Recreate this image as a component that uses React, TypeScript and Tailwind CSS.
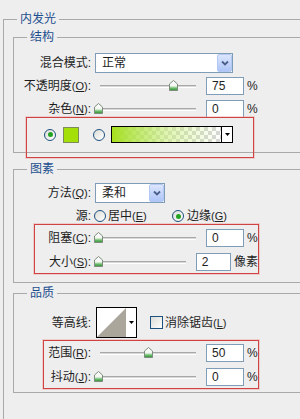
import React from 'react';

const FONT = '"Liberation Sans", "Noto Sans CJK SC", sans-serif';

const Legend: React.FC<{ children: React.ReactNode }> = ({ children }) => (
  <legend className="ml-[13px] px-[3px] text-[12px] leading-[16px] text-[#1d4f8f]">{children}</legend>
);

const Key: React.FC<{ k: string }> = ({ k }) => (
  <span className="text-[11px]">(<u>{k}</u>)</span>
);

const ComboButton: React.FC = () => (
  <div className="flex h-[18px] w-[15px] items-center justify-center rounded-[2px] border border-[#b4c8f4] bg-gradient-to-b from-[#dce6fd] to-[#aec5f7]">
    <svg width="8" height="6" viewBox="0 0 8 6">
      <path d="M1 1.5 L4 4.5 L7 1.5" fill="none" stroke="#4a5f8a" strokeWidth="1.8" />
    </svg>
  </div>
);

const Select: React.FC<{ value: string; width: string }> = ({ value, width }) => (
  <div className={`flex h-[20px] items-center border border-[#7f9db9] bg-white pl-[6px] ${width}`}>
    <span className="flex-1">{value}</span>
    <ComboButton />
  </div>
);

const Slider: React.FC<{ value: number }> = ({ value }) => (
  <div className="relative h-[18px] w-[115px]">
    <div className="absolute left-[9px] right-[10px] top-[8px] h-[3px] border-t border-b border-t-[#a8a8a8] border-b-white bg-[#d8d8d8]" />
    <svg className="absolute top-[3px]" style={{ left: 7 + value - 4.5 }} width="9" height="11" viewBox="0 0 9 11">
      <defs>
        <linearGradient id="thumb" x1="0" y1="0" x2="0" y2="1">
          <stop offset="0" stopColor="#ffffff" />
          <stop offset="0.55" stopColor="#f2f5f0" />
          <stop offset="0.75" stopColor="#6fc06f" />
          <stop offset="1" stopColor="#2f8f33" />
        </linearGradient>
      </defs>
      <path d="M0.5 10.5 V4 L4.5 0.5 L8.5 4 V10.5 Z" fill="url(#thumb)" stroke="#7d8c7d" strokeWidth="1" />
    </svg>
  </div>
);

const NumBox: React.FC<{ value: string }> = ({ value }) => (
  <div className="h-[18px] w-[38px] border border-[#7f9db9] bg-white pl-[5px] leading-[16px]">{value}</div>
);

const Radio: React.FC<{ checked?: boolean }> = ({ checked }) => (
  <div className="flex h-[12px] w-[12px] items-center justify-center rounded-full border border-[#1c5180] bg-gradient-to-br from-[#dcdcd7] to-white">
    {checked && <div className="h-[5px] w-[5px] rounded-full bg-[#23a323]" />}
  </div>
);

const SliderRow: React.FC<{
  label: React.ReactNode;
  labelW: string;
  value: number;
  num: string;
  unit: string;
}> = ({ label, labelW, value, num, unit }) => (
  <div className="flex h-[18px] items-center">
    <div className={`shrink-0 whitespace-nowrap text-right ${labelW}`}>{label}</div>
    <Slider value={value} />
    <NumBox value={num} />
    <span className="ml-[3px] shrink-0 whitespace-nowrap">{unit}</span>
  </div>
);

const RedBox: React.FC<{ className: string; children: React.ReactNode }> = ({ className, children }) => (
  <div className={`border border-[#cf4343] shadow-[0_0_0_1px_rgba(235,140,140,0.35)] ${className}`}>{children}</div>
);

export default function App() {
  return (
    <div className="h-[419px] w-[300px] overflow-hidden bg-[#eeeeee] text-[12px] text-[#1e1e1e]" style={{ fontFamily: FONT }}>
      <fieldset className="ml-[3px] mt-[11px] h-[460px] w-[345px] border border-[#a9a9a9]">
        <Legend>内发光</Legend>

        <fieldset className="ml-[9px] mt-[2px] w-[330px] border border-[#a9a9a9]">
          <Legend>结构</Legend>
          <div className="mt-[8px] flex h-[20px] items-center">
            <div className="w-[77px] text-right">混合模式:</div>
            <div className="ml-[4px]">
              <Select value="正常" width="w-[138px]" />
            </div>
          </div>
          <div className="mt-[4px]">
            <SliderRow label={<>不透明度<Key k="O" />:</>} labelW="w-[77px]" value={75} num="75" unit="%" />
          </div>
          <div className="mt-[5px]">
            <SliderRow label={<>杂色<Key k="N" />:</>} labelW="w-[77px]" value={0} num="0" unit="%" />
          </div>
          <RedBox className="relative -mb-[6px] ml-[12px] mt-[-1px] w-[228px] pb-[14px] pt-[8px]">
            <div className="flex h-[17px] items-center">
              <div className="ml-[17px]"><Radio checked /></div>
              <div className="ml-[7px] h-[16px] w-[16px] border border-[#7c8a5c] bg-[#a4df0a]" />
              <div className="ml-[14px]"><Radio /></div>
              <div className="ml-[6px] flex h-[17px] w-[122px] border border-black">
                <div className="relative flex-1 bg-[repeating-conic-gradient(#d6d6d6_0%_25%,#ffffff_0%_50%)] bg-[length:8px_8px]">
                  <div className="absolute inset-0 bg-gradient-to-r from-[#a6e01a] via-[#c9ee7c]/60 to-transparent" />
                </div>
                <div className="flex w-[11px] items-center justify-center border-l border-black bg-white">
                  <svg width="5" height="3" viewBox="0 0 5 3"><path d="M0 0 H5 L2.5 3 Z" fill="#000" /></svg>
                </div>
              </div>
            </div>
          </RedBox>
        </fieldset>

        <fieldset className="ml-[9px] mt-[8px] w-[330px] border border-[#a9a9a9]">
          <Legend>图素</Legend>
          <div className="mt-[6px] flex h-[20px] items-center">
            <div className="w-[77px] text-right">方法<Key k="Q" />:</div>
            <div className="ml-[4px]">
              <Select value="柔和" width="w-[70px]" />
            </div>
          </div>
          <div className="mt-[5px] flex h-[16px] items-center">
            <div className="w-[77px] text-right">源:</div>
            <div className="ml-[3px] flex w-[78px] items-center">
              <Radio />
              <span className="ml-[2px]">居中<Key k="E" /></span>
            </div>
            <Radio checked />
            <span className="ml-[3px]">边缘<Key k="G" /></span>
          </div>
          <RedBox className="mb-[8px] ml-[20px] flex w-[225px] flex-col gap-[6px] pb-[2px] pt-[4px]">
            <SliderRow label={<>阻塞<Key k="C" />:</>} labelW="w-[56px]" value={0} num="0" unit="%" />
            <SliderRow label={<>大小<Key k="S" />:</>} labelW="w-[56px]" value={0} num="2" unit="像素" />
          </RedBox>
        </fieldset>

        <fieldset className="ml-[9px] mt-[2px] w-[330px] border border-[#a9a9a9]">
          <Legend>品质</Legend>
          <div className="mt-[6px] flex h-[31px] items-center">
            <div className="w-[77px] text-right">等高线:</div>
            <div className="ml-[5px] flex h-[31px] w-[41px] border border-black bg-white">
              <svg className="flex-1" viewBox="0 0 29 29" preserveAspectRatio="none">
                <path d="M0 29 L29 0 V29 Z" fill="#aaa69b" />
              </svg>
              <div className="flex w-[10px] items-center justify-center bg-white">
                <svg width="5" height="3" viewBox="0 0 5 3"><path d="M0 0 H5 L2.5 3 Z" fill="#000" /></svg>
              </div>
            </div>
            <div className="ml-[13px] h-[13px] w-[13px] border border-[#1c5180] bg-gradient-to-br from-[#dcdcd7] to-white" />
            <span className="ml-[2px]">消除锯齿<Key k="L" /></span>
          </div>
          <RedBox className="mb-[3px] ml-[29px] mt-[2px] flex w-[216px] flex-col gap-[6px] pb-[2px] pt-[3px]">
            <SliderRow label={<>范围<Key k="R" />:</>} labelW="w-[47px]" value={50} num="50" unit="%" />
            <SliderRow label={<>抖动<Key k="J" />:</>} labelW="w-[47px]" value={0} num="0" unit="%" />
          </RedBox>
        </fieldset>
      </fieldset>
    </div>
  );
}
